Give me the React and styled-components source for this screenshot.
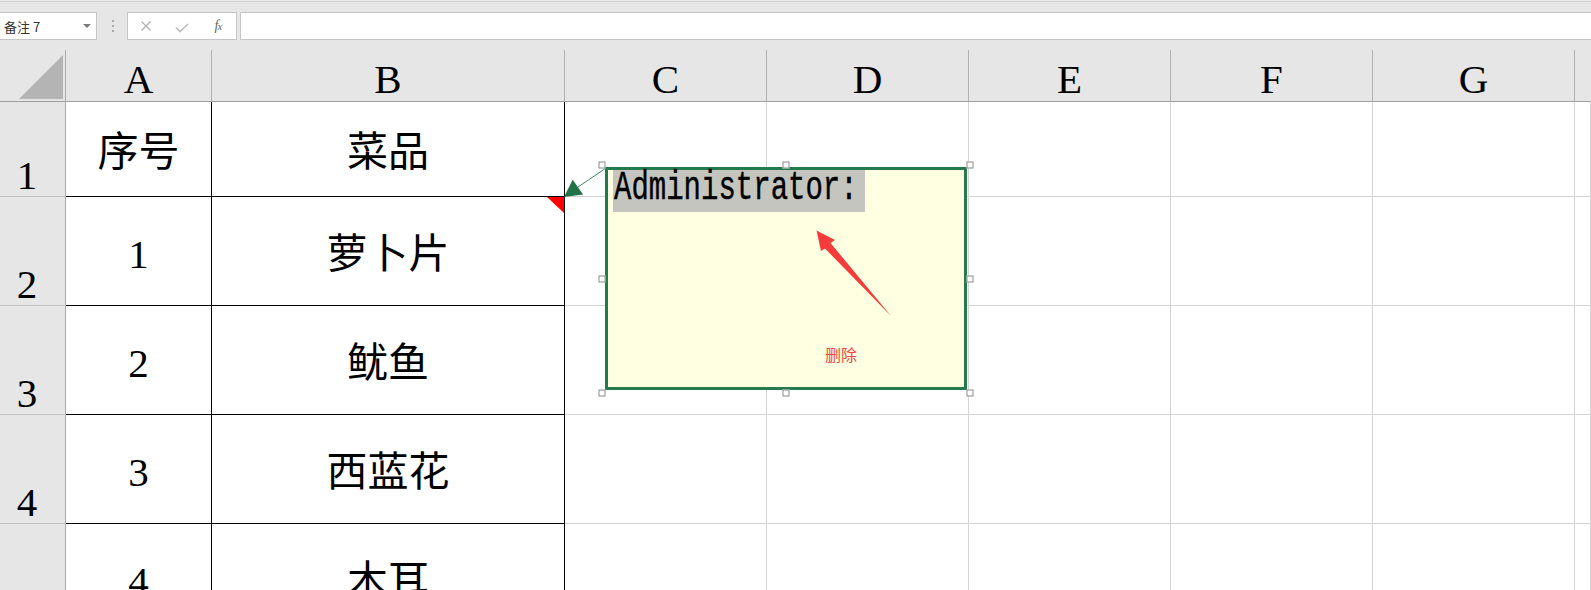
import React from "react";
import styled, { createGlobalStyle } from "styled-components";

const GlobalStyle = createGlobalStyle`
  html, body {
    margin: 0;
    padding: 0;
    overflow: hidden;
    background: #fff;
  }
  body {
    font-family: "Liberation Serif", "Noto Sans CJK SC", serif;
  }
`;

const Page = styled.div`
  position: relative;
  width: 1591px;
  height: 590px;
  overflow: hidden;
`;

/* ---------- formula bar ---------- */

const Toolbar = styled.div`
  display: flex;
  align-items: center;
  height: 50px;
  box-sizing: border-box;
  padding: 12px 0 10px;
  background: linear-gradient(#ececec 0 1px, #d3d3d3 1px 2px, #e6e6e6 2px);
`;

const Field = styled.div`
  box-sizing: border-box;
  height: 28px;
  background: #fff;
  border: 1px solid #c6c6c6;
`;

const NameBox = styled(Field)`
  width: 98px;
  margin-left: -1px;
  display: flex;
  align-items: center;
  justify-content: space-between;
  padding: 0 5px 0 4px;
  font: 13px "Noto Sans CJK SC", "Noto Sans", sans-serif;
  color: #333;
`;

const Caret = styled.span`
  width: 0;
  height: 0;
  border-left: 4px solid transparent;
  border-right: 4px solid transparent;
  border-top: 4px solid #7a7a7a;
`;

const Grip = styled.div`
  width: 2px;
  height: 12px;
  margin: 0 13px 0 15px;
  background: repeating-linear-gradient(#a9a9a9 0 2px, transparent 2px 5px);
`;

const FxGroup = styled(Field)`
  width: 110px;
  display: flex;
`;

const FxSlot = styled.div`
  width: 36px;
  display: flex;
  align-items: center;
  justify-content: center;
`;

const FxLabel = styled.span`
  font: italic 14px "Liberation Serif", serif;
  color: #666;
  letter-spacing: -1px;
  small {
    font-size: 11px;
  }
`;

const FormulaInput = styled(Field)`
  flex: 1;
  margin: 0 -2px 0 3px;
`;

/* ---------- grid ---------- */

const Sheet = styled.div`
  display: grid;
  grid-template-columns: 66px 146px 353px repeat(5, 202px) 1fr;
  grid-template-rows: 52px 95px repeat(4, 109px);
  font-size: 41px;
  line-height: 41px;
  color: #000;
`;

const Corner = styled.div`
  display: flex;
  justify-content: flex-end;
  align-items: flex-end;
  padding: 0 2px 2px 0;
  background: #e6e6e6;
  border-right: 1px solid #ababab;
  border-bottom: 1px solid #9f9f9f;
`;

const CornerMark = styled.span`
  width: 0;
  height: 0;
  border-left: 44px solid transparent;
  border-bottom: 44px solid #b4b4b4;
`;

const ColHead = styled.div`
  display: flex;
  justify-content: center;
  align-items: flex-end;
  padding-bottom: 1px;
  background: #e6e6e6;
  border-right: 1px solid ${(p) => (p.$last ? "transparent" : "#b1b1b1")};
  border-bottom: 1px solid #9f9f9f;
`;

const RowHead = styled.div`
  display: flex;
  justify-content: center;
  align-items: flex-end;
  padding-right: 11px;
  background: #e6e6e6;
  border-right: 1px solid #ababab;
  border-bottom: 1px solid #c2c2c2;
`;

const Cell = styled.div`
  position: relative;
  display: flex;
  justify-content: center;
  align-items: center;
  padding-top: 7px;
  border-right: 1px solid ${(p) => (p.$ruled ? "#000" : "#d4d4d4")};
  border-bottom: 1px solid ${(p) => (p.$ruled ? "#000" : "#d4d4d4")};
`;

const NoteFlag = styled.span`
  position: absolute;
  top: 0;
  right: 0;
  width: 0;
  height: 0;
  border-top: 16px solid #ff0000;
  border-left: 17px solid transparent;
`;

/* ---------- comment ---------- */

const Connector = styled.svg`
  position: absolute;
  left: 555px;
  top: 160px;
  pointer-events: none;
`;

const CommentFrame = styled.div`
  position: absolute;
  left: 602px;
  top: 165px;
  width: 368px;
  height: 228px;
  box-sizing: border-box;
  padding: 2px 3px 3px 3px;
  display: flex;
`;

const NoteBox = styled.div`
  position: relative;
  flex: 1;
  box-sizing: border-box;
  padding-left: 5px;
  background: #ffffe1;
  border: 3px solid #247a4c;
`;

const Author = styled.span`
  display: inline-block;
  height: 42px;
  line-height: 42px;
  padding: 0 7px 0 1px;
  background: #c5c5bf;
  font: 29px "Liberation Mono", monospace;
  color: #000;
  -webkit-text-stroke: 0.3px #000;
`;

const AuthorText = styled.span`
  display: inline-block;
  transform: translateY(2.5px) scaleY(1.38);
`;

const Scribble = styled.svg`
  position: absolute;
  left: 202px;
  top: 55px;
`;

const Remark = styled.span`
  position: absolute;
  left: 217px;
  top: 176px;
  font: 16px/16px "Noto Sans CJK SC", sans-serif;
  color: #f04848;
`;

const Handle = styled.span`
  position: absolute;
  left: ${(p) => p.$x};
  top: ${(p) => p.$y};
  width: 7px;
  height: 7px;
  box-sizing: border-box;
  background: #fff;
  border: 1px solid #8a8a8a;
  transform: translate(-50%, -50%);
`;

const COLS = ["A", "B", "C", "D", "E", "F", "G", ""];

const ROWS = [
  { n: 1, a: "序号", b: "菜品" },
  { n: 2, a: "1", b: "萝卜片", note: true },
  { n: 3, a: "2", b: "鱿鱼" },
  { n: 4, a: "3", b: "西蓝花" },
  { n: 5, a: "4", b: "木耳" },
];

const EMPTY = [0, 1, 2, 3, 4, 5];

const HANDLES = [
  ["0%", "0%"], ["50%", "0%"], ["100%", "0%"],
  ["0%", "50%"], ["100%", "50%"],
  ["0%", "100%"], ["50%", "100%"], ["100%", "100%"],
];

export default function App() {
  return (
    <>
      <GlobalStyle />
      <Page>
        <Toolbar>
          <NameBox>
            备注 7
            <Caret />
          </NameBox>
          <Grip />
          <FxGroup>
            <FxSlot>
              <svg width="10" height="10" viewBox="0 0 10 10">
                <path d="M0.5 0.5 L9.5 9.5 M9.5 0.5 L0.5 9.5" stroke="#b0b0b0" strokeWidth="1.3" />
              </svg>
            </FxSlot>
            <FxSlot>
              <svg width="14" height="10" viewBox="0 0 14 10" style={{ marginTop: 3 }}>
                <path d="M1 4.5 L5 8.5 L13 1" fill="none" stroke="#bdbdbd" strokeWidth="1.7" />
              </svg>
            </FxSlot>
            <FxSlot>
              <FxLabel>
                f<small>x</small>
              </FxLabel>
            </FxSlot>
          </FxGroup>
          <FormulaInput />
        </Toolbar>

        <Sheet>
          <Corner>
            <CornerMark />
          </Corner>
          {COLS.map((c, i) => (
            <ColHead key={i} $last={i === COLS.length - 1}>
              {c}
            </ColHead>
          ))}
          {ROWS.map((r) => (
            <React.Fragment key={r.n}>
              <RowHead>{r.n}</RowHead>
              <Cell $ruled>{r.a}</Cell>
              <Cell $ruled>
                {r.b}
                {r.note && <NoteFlag />}
              </Cell>
              {EMPTY.map((i) => (
                <Cell key={i} />
              ))}
            </React.Fragment>
          ))}
        </Sheet>

        <Connector width="60" height="45" viewBox="555 160 60 45">
          <line x1="578" y1="187" x2="606" y2="168" stroke="#3b8a5c" strokeWidth="1" />
          <polygon points="564,197 583.1,194.6 572.7,179.8" fill="#217346" />
        </Connector>

        <CommentFrame>
          <NoteBox>
            <Author>
              <AuthorText>Administrator:</AuthorText>
            </Author>
            <Scribble width="90" height="100" viewBox="810 225 90 100">
              <polygon
                points="816.5,230.5 835,240 830.5,243 891.5,316.5 825,248.5 821,251"
                fill="#f53b3b"
              />
            </Scribble>
            <Remark>删除</Remark>
          </NoteBox>
          {HANDLES.map(([x, y], i) => (
            <Handle key={i} $x={x} $y={y} />
          ))}
        </CommentFrame>
      </Page>
    </>
  );
}
